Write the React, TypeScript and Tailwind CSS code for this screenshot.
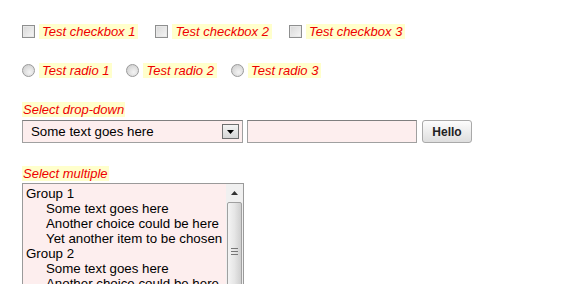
import React from "react";

const text = "bg-[#ffffcc] text-[#ee0000] italic text-[13px] leading-[15px]";
const label = `${text} px-[3px]`;

function Checkbox({ text }: { text: string }) {
  return (
    <div className="flex items-center">
      <span className="w-[13px] h-[13px] border border-[#8e8f8f] bg-gradient-to-br from-[#d8d8d8] to-[#f6f6f6] shadow-[inset_0_0_0_1px_#e8e8e8]" />
      <span className={`${label} ml-[4px]`}>{text}</span>
    </div>
  );
}

function Radio({ text }: { text: string }) {
  return (
    <div className="flex items-center">
      <span className="w-[13px] h-[13px] rounded-full border border-[#9a9a9a] bg-[radial-gradient(circle_at_60%_65%,#f4f4f4,#c8c8c8)]" />
      <span className={`${label} ml-[4px]`}>{text}</span>
    </div>
  );
}

const items: { text: string; group?: boolean }[] = [
  { text: "Group 1", group: true },
  { text: "Some text goes here" },
  { text: "Another choice could be here" },
  { text: "Yet another item to be chosen" },
  { text: "Group 2", group: true },
  { text: "Some text goes here" },
  { text: "Another choice could be here" },
  { text: "Yet another item to be chosen" },
];

export default function App() {
  return (
    <div
      className="w-[582px] h-[284px] overflow-hidden bg-white pl-[22px] pt-[24px] text-black"
      style={{ fontFamily: '"Liberation Sans", Arial, sans-serif' }}
    >
      {/* checkboxes */}
      <div className="flex items-center gap-[17px] h-[15px]">
        <Checkbox text="Test checkbox 1" />
        <Checkbox text="Test checkbox 2" />
        <Checkbox text="Test checkbox 3" />
      </div>

      {/* radios */}
      <div className="flex items-center gap-[14px] h-[15px] mt-[24px]">
        <Radio text="Test radio 1" />
        <Radio text="Test radio 2" />
        <Radio text="Test radio 3" />
      </div>

      {/* drop-down */}
      <div className={`${text} block w-fit mt-[24px] px-[1px]`}>Select drop-down</div>
      <div className="flex items-center mt-[3px] h-[23px]">
        <div className="w-[221px] h-[23px] border border-[#a0a0a0] border-t-[#7f7f7f] bg-[#fdeeee] flex items-center pl-[8px] pr-[3px] text-[13.3px]">
          <span className="flex-1">Some text goes here</span>
          <span className="w-[17px] h-[15px] border border-[#6f6f6f] bg-gradient-to-b from-[#f4f4f4] to-[#d6d6d6] flex items-center justify-center">
            <svg width="7" height="4" viewBox="0 0 7 4">
              <path d="M0 0h7L3.5 4z" fill="#000" />
            </svg>
          </span>
        </div>
        <div className="w-[170px] h-[23px] ml-[4px] border border-[#a0a0a0] border-t-[#7f7f7f] bg-[#fdeeee]" />
        <button className="ml-[5px] w-[50px] h-[23px] rounded-[3px] border border-[#a9a9a9] bg-gradient-to-b from-[#fdfdfd] to-[#dedede] text-[12px] font-bold text-[#222]">
          Hello
        </button>
      </div>

      {/* select multiple */}
      <div className={`${text} block w-fit mt-[23px] px-[1px]`}>Select multiple</div>
      <div className="mt-[2px] w-[222px] h-[120px] border border-[#9a9a9a] bg-[#fdeeee] flex">
        <div className="flex-1 pl-[3px] pt-[2px] text-[13.3px] leading-[15px] overflow-hidden">
          {items.map((it, i) => (
            <div key={i} className={it.group ? "" : "pl-[20px] whitespace-nowrap"}>
              {it.text}
            </div>
          ))}
        </div>
        <div className="w-[17px] bg-[#f0f0f0] flex flex-col items-center">
          <div className="h-[17px] w-full flex items-center justify-center">
            <svg width="7" height="4" viewBox="0 0 7 4">
              <path d="M0 4h7L3.5 0z" fill="#333" />
            </svg>
          </div>
          <div className="mt-[1px] w-[15px] flex-1 rounded-[2px] border border-[#a0a0a0] bg-gradient-to-r from-[#f4f4f4] via-[#e6e6e6] to-[#cfcfcf] flex flex-col items-center pt-[45px] gap-[2px]">
            <span className="w-[7px] h-[1px] bg-[#777]" />
            <span className="w-[7px] h-[1px] bg-[#777]" />
            <span className="w-[7px] h-[1px] bg-[#777]" />
          </div>
        </div>
      </div>
    </div>
  );
}
